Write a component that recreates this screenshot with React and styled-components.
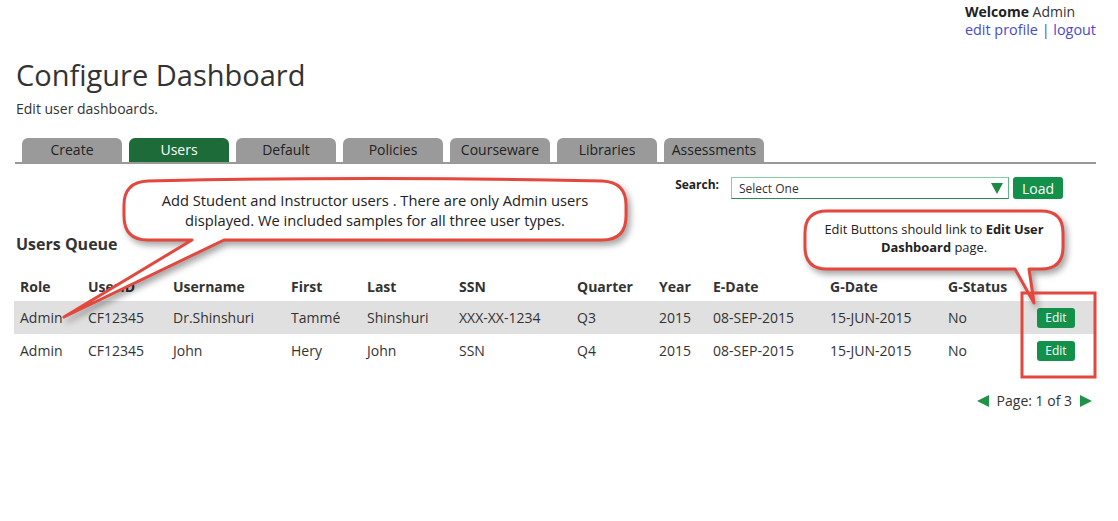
import React from 'react'
import styled, {createGlobalStyle} from 'styled-components'

const GlobalStyle = createGlobalStyle`
  body {
    margin: 0;
    background: #fff;
    font-family: "Open Sans", "DejaVu Sans", sans-serif;
    color: #333;
  }
`;

const red = '#e3473d';
const green = '#13904a';

const Page = styled.div`
  position: relative;
  width: 1118px;
  height: 521px;
  padding: 3px 22px 0 15px;
  box-sizing: border-box;
  overflow: hidden;
`;

const TopBar = styled.div`
  display: flex;
  justify-content: flex-end;
`;

const Welcome = styled.div`
  font-size: 14px;
  line-height: 18px;
  text-align: left;
  b { font-weight: 700; color: #222; }
`;

const TopLinks = styled.div`
  color: #4949c9;
  font-size: 14.4px;
  a { color: #4949c9; text-decoration: none; }
`;

const Title = styled.h1`
  margin: 17px 0 0 1px;
  font-size: 29px;
  line-height: 38px;
  font-weight: 400;
  color: #333;
`;

const Subtitle = styled.p`
  margin: 5px 0 0 1px;
  font-size: 14px;
  line-height: 19px;
`;

const Tabs = styled.div`
  display: flex;
  gap: 7px;
  margin-top: 20px;
  padding-left: 7px;
  border-bottom: 2px solid #999;
`;

const Tab = styled.div`
  width: 100px;
  height: 24px;
  line-height: 24px;
  text-align: center;
  font-size: 14px;
  border-radius: 6px 6px 0 0;
  background: ${p => (p.$active ? '#1c6b38' : '#9a9a9a')};
  color: ${p => (p.$active ? '#fff' : '#222')};
`;

const SearchRow = styled.div`
  display: flex;
  justify-content: flex-end;
  align-items: flex-start;
  margin-top: 13px;
  padding-right: 33px;
`;

const SearchLabel = styled.span`
  font-size: 12px;
  font-weight: 700;
  color: #222;
  margin: -1px 12px 0 0;
`;

const Select = styled.div`
  width: 264px;
  height: 20px;
  border: 1px solid #86cfa4;
  border-bottom-color: #2e8a52;
  border-right-color: #5fb583;
  display: flex;
  align-items: center;
  justify-content: space-between;
  padding: 0 5px 0 7px;
  font-size: 12px;
  color: #333;
`;

const Caret = styled.span`
  width: 0;
  height: 0;
  border-left: 6px solid transparent;
  border-right: 6px solid transparent;
  border-top: 11px solid #1b8a43;
`;

const LoadButton = styled.button`
  margin-left: 4px;
  width: 50px;
  height: 22px;
  border: none;
  border-radius: 3px;
  background: ${green};
  color: #fff;
  font-family: inherit;
  font-size: 14px;
  padding: 0;
`;

const SectionTitle = styled.h2`
  margin: 34px 0 0 1px;
  font-size: 16px;
  line-height: 22px;
  font-weight: 700;
  color: #333;
`;

const Table = styled.table`
  margin-top: 16px;
  margin-left: -1px;
  width: 1082px;
  border-collapse: collapse;
  table-layout: fixed;
  font-size: 14px;
  th {
    height: 30px;
    text-align: left;
    font-weight: 700;
    padding: 0 0 0 6px;
    color: #333;
  }
  td {
    height: 33px;
    padding: 0 0 0 6px;
    color: #333;
  }
`;

const Row = styled.tr`
  background: ${p => (p.$shaded ? '#e0e0e0' : 'transparent')};
`;

const EditCell = styled.td`
  text-align: center;
`;

const EditButton = styled.button`
  width: 38px;
  height: 20px;
  border: none;
  border-radius: 3px;
  background: ${green};
  color: #fff;
  font-family: inherit;
  font-size: 12px;
  padding: 0;
  margin-left: -12px;
`;

const Pager = styled.div`
  display: flex;
  justify-content: flex-end;
  align-items: center;
  gap: 8px;
  margin-top: 24px;
  padding-right: 4px;
  font-size: 14px;
  line-height: 20px;
`;

const Arrow = styled.span`
  width: 0;
  height: 0;
  border-top: 6px solid transparent;
  border-bottom: 6px solid transparent;
  ${p => (p.$dir === 'left'
    ? `border-right: 12px solid #1f9448;`
    : `border-left: 12px solid #1f9448;`)}
`;

const Overlay = styled.svg`
  position: absolute;
  left: 0;
  top: 0;
  pointer-events: none;
`;

const Shape = styled.path`
  fill: #fff;
  stroke: ${red};
  stroke-width: 3;
  stroke-linejoin: round;
  filter: drop-shadow(3px 4px 3px rgba(0, 0, 0, 0.35));
`;

const Note = styled.div`
  position: absolute;
  text-align: center;
  color: #222;
  font-size: ${p => p.$size}px;
  line-height: ${p => p.$lh}px;
  white-space: nowrap;
  b { font-weight: 700; }
`;

const cols = [68, 85, 118, 76, 92, 118, 82, 54, 117, 118, 80, 74];
const heads = ['Role', 'UserID', 'Username', 'First', 'Last', 'SSN', 'Quarter', 'Year', 'E-Date', 'G-Date', 'G-Status', ''];
const users = [
  ['Admin', 'CF12345', 'Dr.Shinshuri', 'Tammé', 'Shinshuri', 'XXX-XX-1234', 'Q3', '2015', '08-SEP-2015', '15-JUN-2015', 'No'],
  ['Admin', 'CF12345', 'John', 'Hery', 'John', 'SSN', 'Q4', '2015', '08-SEP-2015', '15-JUN-2015', 'No'],
];
const tabs = ['Create', 'Users', 'Default', 'Policies', 'Courseware', 'Libraries', 'Assessments'];

export default function App() {
  return (
    <Page>
      <GlobalStyle />
      <TopBar>
        <Welcome>
          <div><b>Welcome</b> Admin</div>
          <TopLinks><a href="#profile">edit profile</a> | <a href="#logout">logout</a></TopLinks>
        </Welcome>
      </TopBar>
      <Title>Configure Dashboard</Title>
      <Subtitle>Edit user dashboards.</Subtitle>

      <Tabs>
        {tabs.map(t => <Tab key={t} $active={t === 'Users'}>{t}</Tab>)}
      </Tabs>

      <SearchRow>
        <SearchLabel>Search:</SearchLabel>
        <Select>Select One<Caret /></Select>
        <LoadButton>Load</LoadButton>
      </SearchRow>

      <SectionTitle>Users Queue</SectionTitle>
      <Table>
        <colgroup>
          {cols.map((w, i) => <col key={i} style={{width: w}} />)}
        </colgroup>
        <thead>
          <tr>{heads.map((h, i) => <th key={i}>{h}</th>)}</tr>
        </thead>
        <tbody>
          {users.map((u, i) => (
            <Row key={i} $shaded={i === 0}>
              {u.map((c, j) => <td key={j}>{c}</td>)}
              <EditCell><EditButton>Edit</EditButton></EditCell>
            </Row>
          ))}
        </tbody>
      </Table>

      <Pager>
        <Arrow $dir="left" />
        <span>Page: 1 of 3</span>
        <Arrow $dir="right" />
      </Pager>

      {/* annotation overlay */}
      <Overlay width="1118" height="521" viewBox="0 0 1118 521">
        <Shape d="M148 181 Q375 176 602 181 Q626 182 626 205 V216 Q626 240 602 240 H224 L64 317 L192 240 H148 Q124 240 124 216 V205 Q124 182 148 181 Z" />
        <Shape d="M827 211 H1041 Q1063 211 1063 233 V247 Q1063 269 1041 269 H1029 L1034 303 L1015 269 H827 Q805 269 805 247 V233 Q805 211 827 211 Z" />
        <rect x="1022" y="293" width="73" height="84" fill="none" stroke={red} strokeWidth="3" />
      </Overlay>
      <Note $size={14.7} $lh={20} style={{left: 130, top: 190, width: 490}}>
        Add Student and Instructor users . There are only Admin users<br />
        displayed. We included samples for all three user types.
      </Note>
      <Note $size={12.9} $lh={18} style={{left: 810, top: 220, width: 248}}>
        Edit Buttons should link to <b>Edit User</b><br />
        <b>Dashboard</b> page.
      </Note>
    </Page>
  )
}
